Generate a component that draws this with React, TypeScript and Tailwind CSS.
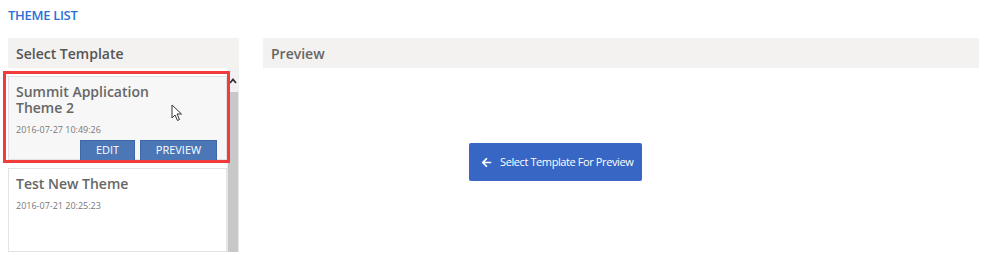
import { FaArrowLeft } from "react-icons/fa";

const templates = [
  { name: "Summit Application Theme 2", date: "2016-07-27 10:49:26", active: true },
  { name: "Test New Theme", date: "2016-07-21 20:25:23", active: false },
];

const Cursor = () => (
  <svg width="12" height="18" viewBox="0 0 12 18" className="absolute left-[171px] top-[104px]">
    <path d="M1 1 L1 14 L4 11 L6.5 16.5 L8.5 15.5 L6 10 L10.5 10 Z" fill="#fff" stroke="#333" strokeWidth="1" strokeLinejoin="round" />
  </svg>
);

export default function App() {
  return (
    <div className="relative w-[1000px] h-[255px] overflow-hidden bg-white font-['Open_Sans',sans-serif]">
      <div className="h-[38px] pl-2 pt-[6px] text-[13px] font-semibold text-[#2a70d6] tracking-[-0.3px]">THEME LIST</div>

      <div className="flex gap-6 pl-2">
        {/* Left column */}
        <div className="w-[231px]">
          <div className="h-[30px] bg-[#f3f2f0] px-2 flex items-center text-[14px] font-semibold text-[#555]">
            Select Template
          </div>
          <div className="flex">
            <div className="w-[219px] flex flex-col gap-2 pt-2">
              {templates.map((t) => (
                <div
                  key={t.name}
                  className={`h-[84px] border border-[#e3e3e3] pl-[7px] pr-2 pt-[7px] flex flex-col ${
                    t.active ? "bg-[#f7f7f7]" : "bg-white"
                  }`}
                >
                  <div className="max-w-[160px] text-[14px] leading-[16px] font-semibold text-[#666]">{t.name}</div>
                  <div className="text-[9px] text-[#777] mt-[7px]">{t.date}</div>
                  {t.active && (
                    <div className="flex justify-end gap-[5px] pr-[1px] mt-[3px]">
                      <button className="w-[55px] h-[21px] bg-[#4c77b6] border border-[#3d67a6] text-white text-[11px]">
                        EDIT
                      </button>
                      <button className="w-[77px] h-[21px] bg-[#4c77b6] border border-[#3d67a6] text-white text-[11px]">
                        PREVIEW
                      </button>
                    </div>
                  )}
                </div>
              ))}
            </div>
            <div className="w-[12px] flex flex-col">
              <div className="h-[24px] bg-[#f1f1f1] flex items-start justify-center pt-[10px]">
                <svg width="8" height="6" viewBox="0 0 8 6">
                  <path d="M1 5 L4 1.5 L7 5" fill="none" stroke="#333" strokeWidth="1.8" />
                </svg>
              </div>
              <div className="flex-1 h-[170px] bg-[#e8e8e8] px-[1px]">
                <div className="h-full bg-[#c8c8c8]" />
              </div>
            </div>
          </div>
        </div>

        {/* Right column */}
        <div className="w-[716px]">
          <div className="h-[30px] bg-[#f3f2f0] px-2 flex items-center text-[14px] font-semibold text-[#666]">
            Preview
          </div>
          <div className="pt-[75px] pl-[206px]">
            <button className="w-[173px] h-[38px] rounded-[2px] bg-[#3766c5] text-white text-[11px] tracking-[-0.4px] whitespace-nowrap flex items-center pl-[12px] gap-[8px]">
              <FaArrowLeft className="w-[11px] h-[11px] shrink-0" />
              Select Template For Preview
            </button>
          </div>
        </div>
      </div>

      {/* annotation box */}
      <div className="absolute left-[3px] top-[71px] w-[227px] h-[92px] border-[3px] border-[#f23b3b]" />
      <Cursor />
    </div>
  );
}
